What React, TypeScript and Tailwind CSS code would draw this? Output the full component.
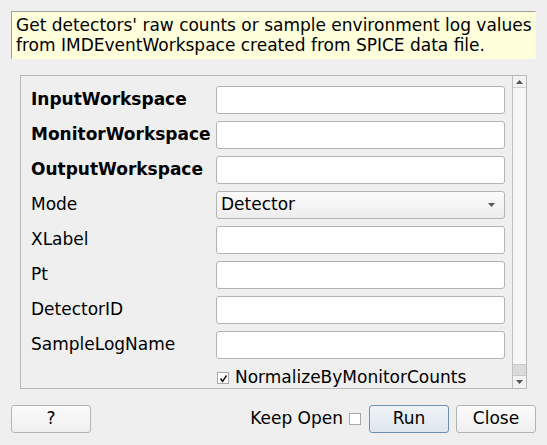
import { useState } from "react";

const fields: { label: string; bold?: boolean; kind?: "combo" }[] = [
  { label: "InputWorkspace", bold: true },
  { label: "MonitorWorkspace", bold: true },
  { label: "OutputWorkspace", bold: true },
  { label: "Mode", kind: "combo" },
  { label: "XLabel" },
  { label: "Pt" },
  { label: "DetectorID" },
  { label: "SampleLogName" },
];

const Check = ({ checked }: { checked: boolean }) => (
  <span className="w-[12px] h-[12px] border border-[#a8a8a8] bg-white flex items-center justify-center">
    {checked && (
      <svg width="9" height="9" viewBox="0 0 9 9">
        <path d="M1.5 4.5 L3.6 7.5 L7.5 1.5" fill="none" stroke="#111" strokeWidth="1.5" />
      </svg>
    )}
  </span>
);

const Button = ({ label, primary }: { label: string; primary?: boolean }) => (
  <button
    className={
      "w-[80px] h-[28px] rounded-[3px] border text-[17px] text-black " +
      (primary
        ? "border-[#6f8fb3] bg-gradient-to-b from-[#f0f4f8] to-[#dfe7ef]"
        : "border-[#b4b4b4] bg-gradient-to-b from-[#fbfbfb] to-[#efefef]")
    }
  >
    {label}
  </button>
);

export default function App() {
  const [normalize, setNormalize] = useState(true);

  return (
    <div className="w-[547px] h-[445px] bg-[#efefef] font-['DejaVu_Sans',sans-serif] text-[17px] text-black flex flex-col overflow-hidden">
      {/* Description */}
      <div className="mx-[11px] mt-[11px] h-[48px] bg-[#ffffdc] border-t border-l border-[#a0a0a0] border-r border-r-[#f8f8f8] pl-[4px] pt-[3px] leading-[20px]">
        Get detectors' raw counts or sample environment log values
        <br />
        from IMDEventWorkspace created from SPICE data file.
      </div>

      {/* Properties panel */}
      <div className="ml-[20px] mt-[16px] w-[507px] h-[314px] border border-[#b8b8b8] flex overflow-hidden">
        <div className="flex-1 pl-[10px] pt-[10px]">
          <div className="grid grid-cols-[185px_289px] gap-y-[7px] items-center">
            {fields.map((f) => (
              <div key={f.label} className="contents">
                <span className={f.bold ? "font-bold" : ""}>{f.label}</span>
                {f.kind === "combo" ? (
                  <div className="h-[28px] rounded-[3px] border border-[#b4b4b4] bg-gradient-to-b from-[#fbfbfb] to-[#ededed] flex items-center justify-between pl-[4px] pr-[9px]">
                    <span>Detector</span>
                    <svg width="7" height="4" viewBox="0 0 7 4">
                      <path d="M0 0 H7 L3.5 4 Z" fill="#555" />
                    </svg>
                  </div>
                ) : (
                  <div className="h-[28px] rounded-[3px] border border-[#b4b4b4] bg-white" />
                )}
              </div>
            ))}
            <div />
            <label
              className="h-[24px] flex items-center gap-[6px] pl-[1px] cursor-pointer"
              onClick={() => setNormalize(!normalize)}
            >
              <Check checked={normalize} />
              <span>NormalizeByMonitorCounts</span>
            </label>
          </div>
        </div>

        {/* Scrollbar */}
        <div className="w-[14px] border-l border-[#c0c0c0] bg-[#f2f2f2] flex flex-col">
          <div className="h-[12px] flex items-center justify-center border-b border-[#d0d0d0]">
            <svg width="7" height="4" viewBox="0 0 7 4">
              <path d="M0 4 H7 L3.5 0 Z" fill="#555" />
            </svg>
          </div>
          <div className="flex-1 bg-[#f7f7f7]" />
          <div className="h-[11px] bg-[#dadada] border-t border-[#c8c8c8]" />
          <div className="h-[13px] flex items-center justify-center border-t border-[#c8c8c8]">
            <svg width="7" height="4" viewBox="0 0 7 4">
              <path d="M0 0 H7 L3.5 4 Z" fill="#555" />
            </svg>
          </div>
        </div>
      </div>

      {/* Bottom buttons */}
      <div className="mt-[16px] px-[11px] h-[28px] flex items-center">
        <Button label="?" />
        <div className="flex-1" />
        <span className="mr-[6px]">Keep Open</span>
        <Check checked={false} />
        <div className="w-[8px]" />
        <Button label="Run" primary />
        <div className="w-[7px]" />
        <Button label="Close" />
      </div>
    </div>
  );
}
